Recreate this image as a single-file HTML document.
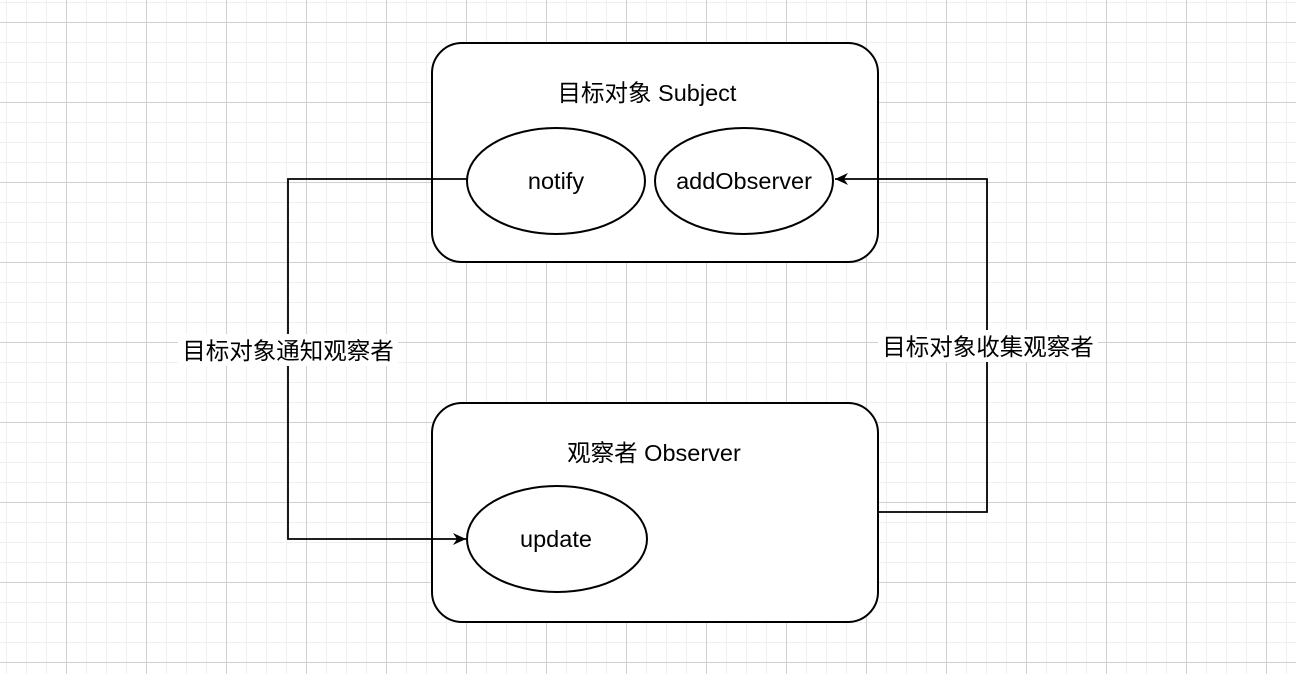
<!DOCTYPE html>
<html><head><meta charset="utf-8"><style>
body{margin:0;width:1296px;height:674px;overflow:hidden;background:#fff;
background-image:
linear-gradient(#d0d0d0 1px,transparent 1px),
linear-gradient(90deg,#d0d0d0 1px,transparent 1px),
linear-gradient(#f0f0f0 1px,transparent 1px),
linear-gradient(90deg,#f0f0f0 1px,transparent 1px);
background-size:80px 80px,80px 80px,20px 20px,20px 20px;
background-position:0 22px,66px 0,0 2px,6px 0;}
svg{position:absolute;left:0;top:0}
text{font-family:"Liberation Sans","Noto Sans CJK SC",sans-serif;font-size:23.5px;fill:#000}
</style></head><body>
<svg width="1296" height="674">
<defs><marker id="a" markerWidth="14" markerHeight="14" refX="13" refY="6" orient="auto" markerUnits="userSpaceOnUse"><path d="M0,0 L13,6 L0,12 L4,6Z" fill="#000"/></marker></defs>
<rect x="432" y="43" width="446" height="219" rx="30" fill="#fff" stroke="#000" stroke-width="2"/>
<rect x="432" y="403" width="446" height="219" rx="30" fill="#fff" stroke="#000" stroke-width="2"/>
<ellipse cx="556" cy="181" rx="89" ry="53" fill="#fff" stroke="#000" stroke-width="2"/>
<ellipse cx="744" cy="181" rx="89" ry="53" fill="#fff" stroke="#000" stroke-width="2"/>
<ellipse cx="557" cy="539" rx="90" ry="53" fill="#fff" stroke="#000" stroke-width="2"/>
<path d="M467,179 H288 V539 H466" fill="none" stroke="#000" stroke-width="1.8" marker-end="url(#a)"/>
<path d="M879,512 H987 V179 H835" fill="none" stroke="#000" stroke-width="1.8" marker-end="url(#a)"/>
<rect x="178" y="334" width="220" height="32" fill="#fff"/>
<rect x="878" y="330" width="220" height="32" fill="#fff"/>
<text x="288" y="359" text-anchor="middle">目标对象通知观察者</text>
<text x="988" y="355" text-anchor="middle">目标对象收集观察者</text>
<text x="647" y="101" text-anchor="middle">目标对象 Subject</text>
<text x="654" y="461" text-anchor="middle">观察者 Observer</text>
<text x="556" y="189" text-anchor="middle">notify</text>
<text x="744" y="189" text-anchor="middle">addObserver</text>
<text x="556" y="547" text-anchor="middle">update</text>
</svg>
</body></html>
